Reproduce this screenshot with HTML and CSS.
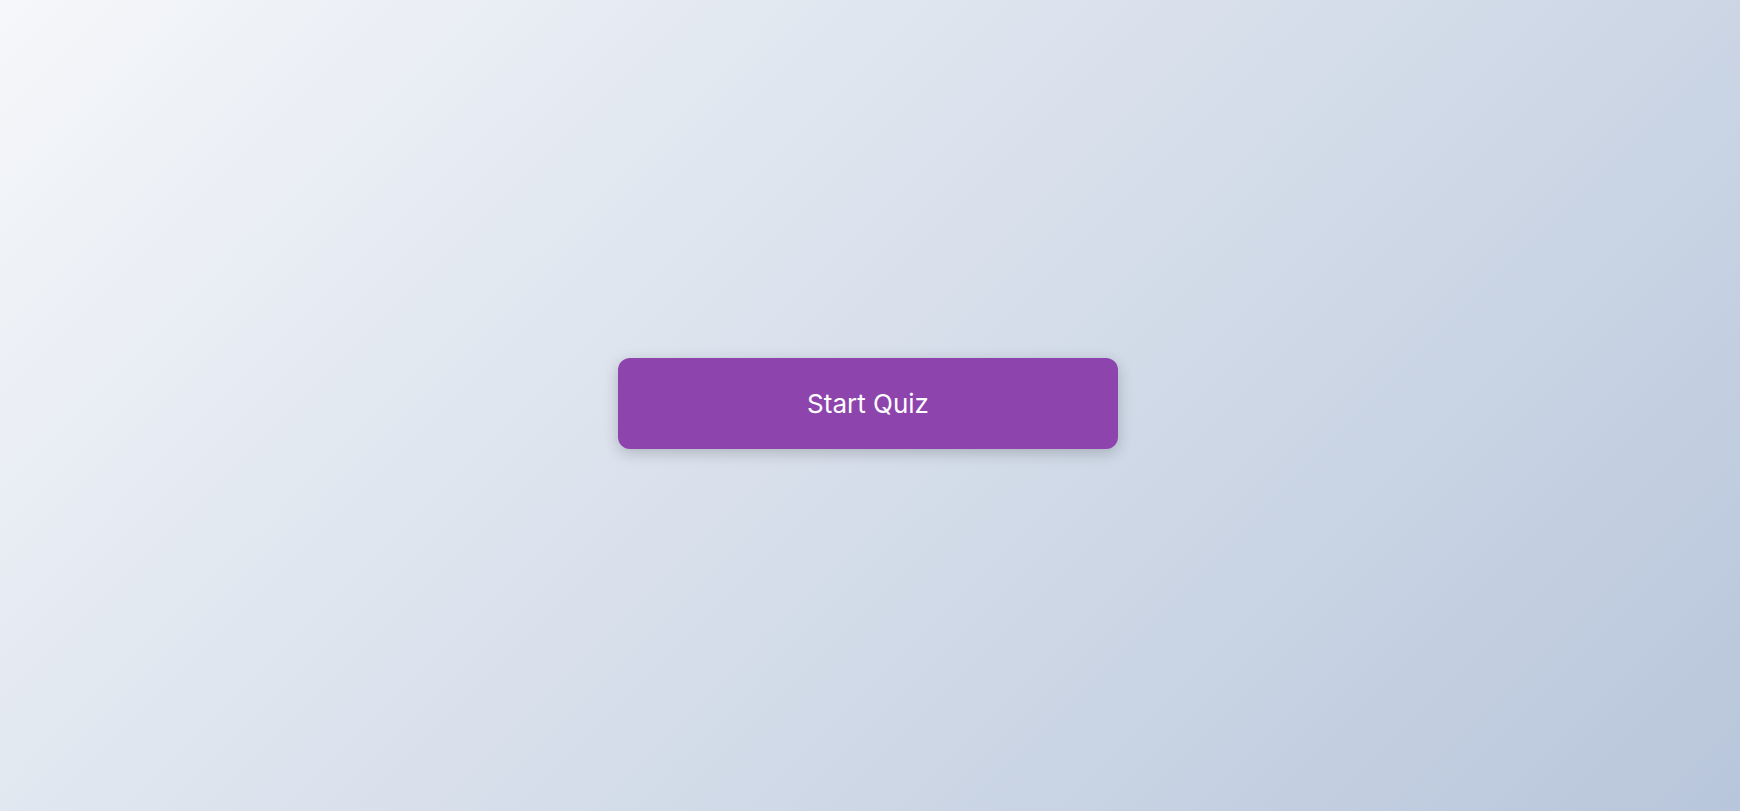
FILE: index.html
```html
<!DOCTYPE html>
<html lang="en">
<head>
<meta charset="utf-8">
<title>Quiz</title>
<link rel="stylesheet" href="styles.css">
</head>
<body>
<main class="stage">
  <button class="start-btn" type="button">Start Quiz</button>
</main>
</body>
</html>
```

FILE: styles.css
```css
html, body {
  margin: 0;
  padding: 0;
  height: 100%;
}
body {
  background-color: #b8c6db;
  background-image: linear-gradient(135deg, #f5f7fa 0%, #b8c6db 100%);
  font-family: "Inter", "Lato", "Liberation Sans", sans-serif;
}
.stage {
  min-height: 100vh;
  display: flex;
  align-items: center;
  justify-content: center;
  box-sizing: border-box;
  padding-bottom: 4px;
  padding-right: 4px;
}
.start-btn {
  width: 500px;
  height: 91px;
  border: none;
  border-radius: 12px;
  background: #8e44ad;
  color: #ffffff;
  font-family: "Inter", "Lato", "Liberation Sans", sans-serif;
  font-weight: 400;
  font-size: 26px;
  box-shadow: 0 4px 15px rgba(0, 0, 0, 0.2);
  cursor: pointer;
}
```
